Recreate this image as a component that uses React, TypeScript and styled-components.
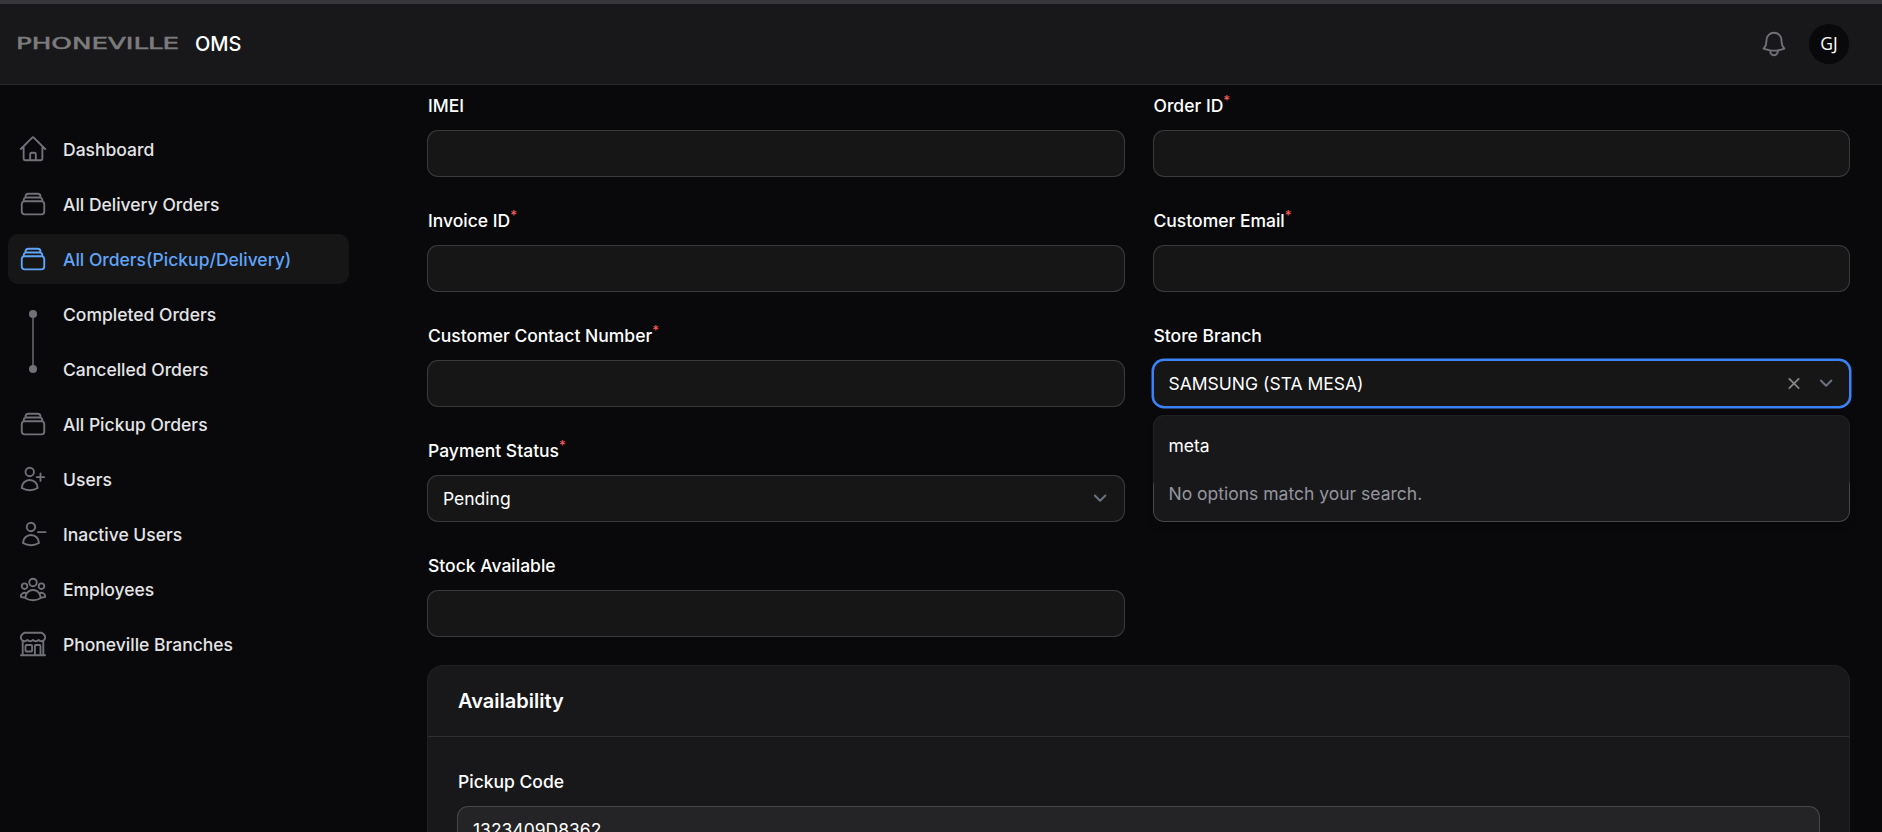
import React from "react";
import styled, { createGlobalStyle, css } from "styled-components";
import {
  HiOutlineHome,
  HiOutlineRectangleStack,
  HiOutlineUserPlus,
  HiOutlineUserMinus,
  HiOutlineUserGroup,
  HiOutlineBuildingStorefront,
  HiOutlineBell,
} from "react-icons/hi2";

const GlobalStyle = createGlobalStyle`
  *, *::before, *::after { box-sizing: border-box; }
  html, body { margin: 0; background: #09090b; overflow: hidden; }
  body {
    font-family: Inter, "Liberation Sans", sans-serif;
    font-size: 17.5px;
    line-height: 30px;
    color: #fff;
  }
`;

const Page = styled.div`
  height: 832px;
  overflow: hidden;
  display: flex;
  flex-direction: column;
`;

const TopBar = styled.header`
  flex: none;
  height: 85px;
  display: flex;
  align-items: center;
  border-top: 4px solid #37373c;
  border-bottom: 1px solid #27272a;
  background: #18181b;
  padding: 0 33px 0 18px;
`;

const Logo = styled.svg`
  display: block;
  overflow: visible;
  width: 160px;
  height: 20px;
`;

const Brand = styled.span`
  margin-left: 17px;
  font-size: 20px;
  font-weight: 500;
`;

const Actions = styled.div`
  margin-left: auto;
  display: flex;
  align-items: center;
  gap: 20px;
  color: #71717a;
`;

const Avatar = styled.div`
  width: 40px;
  height: 40px;
  border-radius: 50%;
  background: #09090b;
  color: #fff;
  font: 400 17.5px/38px "Open Sans", "Noto Sans", sans-serif;
  text-align: center;
`;

const Body = styled.div`
  flex: 1;
  min-height: 0;
  display: flex;
`;

const Sidebar = styled.nav`
  flex: none;
  width: 428px;
  padding: 39px 79px 0 8px;
  display: flex;
  flex-direction: column;
  gap: 5px;
`;

const NavItem = styled.a<{ $active?: boolean }>`
  height: 50px;
  flex: none;
  display: flex;
  align-items: center;
  gap: 15px;
  padding: 0 10px;
  border-radius: 10px;
  font-weight: 500;
  color: ${(p) => (p.$active ? "#60a5fa" : "#e4e4e7")};
  background: ${(p) => (p.$active ? "#161617" : "transparent")};

  svg {
    flex: none;
    color: ${(p) => (p.$active ? "#60a5fa" : "#71717a")};
  }
`;

const NavText = styled.span`
  padding-top: 2px;
`;

const TreeMark = styled.span<{ $line: "down" | "up" }>`
  flex: none;
  position: relative;
  width: 30px;
  height: 50px;
  display: flex;
  align-items: center;
  justify-content: center;

  &::before {
    content: "";
    width: 8px;
    height: 8px;
    border-radius: 50%;
    background: #71717a;
  }
  &::after {
    content: "";
    position: absolute;
    left: 14px;
    width: 2px;
    background: #52525b;
    ${(p) => (p.$line === "down" ? "top: 29px; bottom: -5px;" : "top: 0; bottom: 29px;")}
  }
`;

const Main = styled.main`
  width: 1421px;
  padding-top: 6px;
`;

const Grid = styled.div`
  display: grid;
  grid-template-columns: 1fr 1fr;
  gap: 30px;
`;

const FieldBox = styled.div`
  display: flex;
  flex-direction: column;
  gap: 10px;
`;

const Label = styled.label`
  height: 30px;
  font-weight: 500;

  sup {
    color: #f85a5a;
    font-size: 13.125px;
    line-height: 0;
    position: relative;
    top: -0.5em;
    vertical-align: baseline;
  }
`;

const Control = styled.div<{ $focused?: boolean; $raised?: boolean }>`
  position: relative;
  height: 45px;
  display: flex;
  align-items: center;
  padding: 0 10px 0 15px;
  border-radius: 10px;
  background: ${(p) => (p.$raised ? "#242426" : "#161617")};
  box-shadow: 0 0 0 1px ${(p) => (p.$raised ? "#464649" : "#3a3a3c")};
  ${(p) =>
    p.$focused &&
    css`
      box-shadow: 0 0 0 2.5px #3b82f6;
    `}
`;

const Icons = styled.div`
  margin-left: auto;
  display: flex;
  align-items: center;
  gap: 13px;

  svg {
    display: block;
  }
`;

const Menu = styled.div`
  position: absolute;
  z-index: 2;
  top: 55px;
  left: 0;
  right: 0;
  height: 105px;
  border-radius: 10px;
  background: #18181b;
  box-shadow: 0 0 0 1px rgba(255, 255, 255, 0.1), 0 5px 8px rgba(0, 0, 0, 0.2);
`;

const MenuRow = styled.div<{ $muted?: boolean }>`
  padding: ${(p) => (p.$muted ? "4px 15px" : "15px 15px 14px")};
  color: ${(p) => (p.$muted ? "#95959d" : "#fff")};
`;

const Section = styled.section`
  margin-top: 30px;
  height: 300px;
  border-radius: 15px;
  background: #18181b;
  box-shadow: 0 0 0 1px #212124;
`;

const SectionTitle = styled.h3`
  margin: 0;
  padding: 20px 30px;
  font-size: 20px;
  font-weight: 600;
  line-height: 30px;
`;

const SectionContent = styled.div`
  border-top: 1px solid #2f2f32;
  padding: 30px;
`;

const Chevron = () => (
  <svg width="26.25" height="26.25" viewBox="0 0 20 20" fill="none" stroke="#6b7280" strokeWidth="1.5" strokeLinecap="round" strokeLinejoin="round">
    <path d="M6 8l4 4 4-4" />
  </svg>
);

const Clear = () => (
  <svg width="12" height="12" viewBox="0 0 12 12" fill="none" stroke="#858585" strokeWidth="1.8">
    <path d="M0.8 0.3L11.2 10.7M11.2 0.3L0.8 10.7" />
  </svg>
);

type FieldProps = {
  label?: string;
  required?: boolean;
  focused?: boolean;
  raised?: boolean;
  children?: React.ReactNode;
};

const Field = ({ label, required, focused, raised, children }: FieldProps) => (
  <FieldBox>
    <Label>
      {label}
      {required && <sup>*</sup>}
    </Label>
    <Control $focused={focused} $raised={raised}>
      {children}
    </Control>
  </FieldBox>
);

export default function App() {
  return (
    <>
      <GlobalStyle />
      <Page>
        <TopBar>
          <Logo viewBox="0 0 160 20">
            <text x="-2" y="15.2" textLength="163" lengthAdjust="spacingAndGlyphs" fontFamily="DejaVu Sans" fontSize="15" fill="#7c7c7d" stroke="#7c7c7d" strokeWidth="0.5">
              PHONEVILLE
            </text>
          </Logo>
          <Brand>OMS</Brand>
          <Actions>
            <HiOutlineBell size={30} />
            <Avatar>GJ</Avatar>
          </Actions>
        </TopBar>
        <Body>
          <Sidebar>
            <NavItem><HiOutlineHome size={30} /><NavText>Dashboard</NavText></NavItem>
            <NavItem><HiOutlineRectangleStack size={30} /><NavText>All Delivery Orders</NavText></NavItem>
            <NavItem $active><HiOutlineRectangleStack size={30} /><NavText>All Orders(Pickup/Delivery)</NavText></NavItem>
            <NavItem><TreeMark $line="down" /><NavText>Completed Orders</NavText></NavItem>
            <NavItem><TreeMark $line="up" /><NavText>Cancelled Orders</NavText></NavItem>
            <NavItem><HiOutlineRectangleStack size={30} /><NavText>All Pickup Orders</NavText></NavItem>
            <NavItem><HiOutlineUserPlus size={30} /><NavText>Users</NavText></NavItem>
            <NavItem><HiOutlineUserMinus size={30} /><NavText>Inactive Users</NavText></NavItem>
            <NavItem><HiOutlineUserGroup size={30} /><NavText>Employees</NavText></NavItem>
            <NavItem><HiOutlineBuildingStorefront size={30} /><NavText>Phoneville Branches</NavText></NavItem>
          </Sidebar>
          <Main>
            <Grid>
              <Field label="IMEI" />
              <Field label="Order ID" required />
              <Field label="Invoice ID" required />
              <Field label="Customer Email" required />
              <Field label="Customer Contact Number" required />
              <Field label="Store Branch" focused>
                SAMSUNG (STA MESA)
                <Icons>
                  <Clear />
                  <Chevron />
                </Icons>
                <Menu>
                  <MenuRow>meta</MenuRow>
                  <MenuRow $muted>No options match your search.</MenuRow>
                </Menu>
              </Field>
              <Field label="Payment Status" required>
                Pending
                <Icons>
                  <Chevron />
                </Icons>
              </Field>
              <Field />
              <Field label="Stock Available" />
            </Grid>
            <Section>
              <SectionTitle>Availability</SectionTitle>
              <SectionContent>
                <Field label="Pickup Code" raised>
                  1323409D8362
                </Field>
              </SectionContent>
            </Section>
          </Main>
        </Body>
      </Page>
    </>
  );
}
